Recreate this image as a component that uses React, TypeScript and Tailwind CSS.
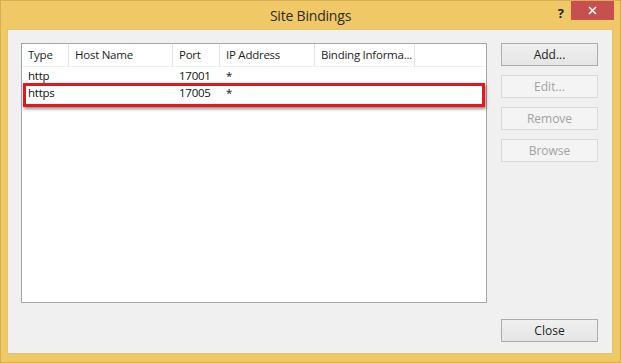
import React from 'react';

interface Binding {
  type: string;
  host: string;
  port: string;
  ip: string;
  info: string;
}

const columns = [
  { label: 'Type', width: 'w-[47px]' },
  { label: 'Host Name', width: 'w-[104px]' },
  { label: 'Port', width: 'w-[47px]' },
  { label: 'IP Address', width: 'w-[95px]' },
  { label: 'Binding Informa...', width: 'w-[100px]' },
];

const bindings: Binding[] = [
  { type: 'http', host: '', port: '17001', ip: '*', info: '' },
  { type: 'https', host: '', port: '17005', ip: '*', info: '' },
];

const DialogButton: React.FC<{ label: string; disabled?: boolean }> = ({ label, disabled }) => (
  <button
    className={
      disabled
        ? 'w-[97px] h-[23px] border border-[#d9d9d9] bg-[#f4f4f4] text-[#a3a3a3] text-[12px]'
        : 'w-[97px] h-[23px] border border-[#acacac] bg-gradient-to-b from-[#f0f0f0] to-[#e5e5e5] text-[#1e1e1e] text-[12px]'
    }
  >
    {label}
  </button>
);

export default function App() {
  return (
    <div
      className="w-[621px] h-[363px] bg-[#f0c865] flex flex-col border border-[#d6ae55]"
      style={{ fontFamily: '"Open Sans", "Noto Sans", sans-serif' }}
    >
      {/* title bar */}
      <div className="relative h-[28px] shrink-0 flex items-center justify-center">
        <span className="text-[14px] text-[#2b2b2b] tracking-[-0.2px]">Site Bindings</span>
        <span className="absolute right-[56px] top-[3px] text-[13px] font-bold text-[#222]">?</span>
        <div className="absolute right-[6px] top-0 w-[43px] h-[19px] bg-[#c7504f] flex items-center justify-center">
          <svg width="9" height="9" viewBox="0 0 9 9">
            <path d="M1 1 L8 8 M8 1 L1 8" stroke="#fff" strokeWidth="1.6" />
          </svg>
        </div>
      </div>

      {/* client area */}
      <div className="flex-1 ml-[6px] mr-[7px] mb-[8px] bg-[#f0f0f0] border border-[#e2c274] flex pl-[13px] pr-[14px] pt-[13px] pb-[11px] gap-[14px]">
        {/* list view */}
        <div className="relative w-[466px] h-[260px] bg-white border border-[#a5a5a5] text-[11.5px] text-[#111] tracking-[-0.25px]">
          <div className="flex h-[23px] border-b border-[#f0f0f0]">
            {columns.map((c) => (
              <div
                key={c.label}
                className={`${c.width} h-full flex items-center pl-[6px] border-r border-[#e5e5e5] text-[#1e1e1e] whitespace-nowrap`}
              >
                {c.label}
              </div>
            ))}
          </div>
          {bindings.map((b) => (
            <div key={b.type} className="flex h-[17px] items-center whitespace-nowrap">
              <div className="w-[47px] pl-[6px]">{b.type}</div>
              <div className="w-[104px] pl-[6px]">{b.host}</div>
              <div className="w-[47px] pl-[6px]">{b.port}</div>
              <div className="w-[95px] pl-[6px]">{b.ip}</div>
              <div className="w-[100px] pl-[6px]">{b.info}</div>
            </div>
          ))}
          {/* red highlight */}
          <div className="absolute left-[1px] top-[39px] w-[462px] h-[24px] border-[3px] border-[#e3171d] shadow-[1px_2px_3px_rgba(0,0,0,0.45)]" />
        </div>

        {/* buttons */}
        <div className="flex flex-col justify-between">
          <div className="flex flex-col gap-[9px]">
            <DialogButton label="Add..." />
            <DialogButton label="Edit..." disabled />
            <DialogButton label="Remove" disabled />
            <DialogButton label="Browse" disabled />
          </div>
          <DialogButton label="Close" />
        </div>
      </div>
    </div>
  );
}
